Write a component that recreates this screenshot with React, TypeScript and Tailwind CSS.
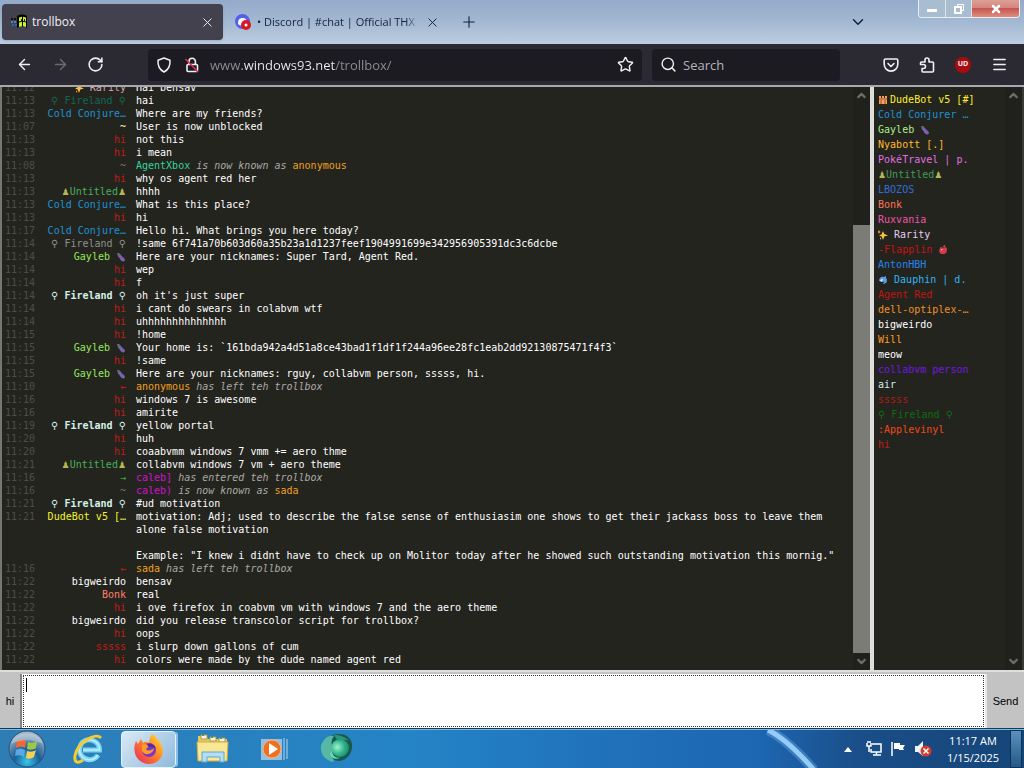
import React from "react";
import { ArrowLeft, ArrowRight, ChevronDown, ChevronUp, Menu, Plus, RotateCw, Search, Star, X } from "lucide-react";

const RED = "text-[#c01c14]";
const FIRE = "text-[#d4f0e8]";
const CYAN = "text-[#1b93d6]";

type Row = {
  time: string;
  name: string;
  color: string;
  text?: string;
  parts?: { value: string; style: string }[];
};

const note = "italic text-[#a9a9a4]";

const rows: Row[] = [
  { time: "11:12", name: "✨ Rarity", color: "text-[#d9a5b5]", text: "Hai bensav" },
  { time: "11:13", name: "⚲ Fireland ⚲", color: "text-[#0f6654]", text: "hai" },
  { time: "11:13", name: "Cold Conjure…", color: CYAN, text: "Where are my friends?" },
  { time: "11:07", name: "~", color: "text-[#fff7c0]", text: "User is now unblocked" },
  { time: "11:13", name: "hi", color: RED, text: "not this" },
  { time: "11:13", name: "hi", color: RED, text: "i mean" },
  { time: "11:08", name: "~", color: "text-[#73736e]", parts: [{ value: "AgentXbox", style: "text-[#35d49a]" }, { value: " is now known as ", style: note }, { value: "anonymous", style: "text-[#f0a020]" }] },
  { time: "11:13", name: "hi", color: RED, text: "why os agent red her" },
  { time: "11:13", name: "♟Untitled♟", color: "text-[#45b05a]", text: "hhhh" },
  { time: "11:13", name: "Cold Conjure…", color: CYAN, text: "What is this place?" },
  { time: "11:13", name: "hi", color: RED, text: "hi" },
  { time: "11:17", name: "Cold Conjure…", color: CYAN, text: "Hello hi. What brings you here today?" },
  { time: "11:14", name: "⚲ Fireland ⚲", color: "text-[#8f8f8b]", text: "!same 6f741a70b603d60a35b23a1d1237feef1904991699e342956905391dc3c6dcbe" },
  { time: "11:14", name: "Gayleb 🍆", color: "text-[#95e85a]", text: "Here are your nicknames: Super Tard, Agent Red." },
  { time: "11:14", name: "hi", color: RED, text: "wep" },
  { time: "11:14", name: "hi", color: RED, text: "f" },
  { time: "11:14", name: "⚲ Fireland ⚲", color: FIRE, text: "oh it's just super" },
  { time: "11:14", name: "hi", color: RED, text: "i cant do swears in colabvm wtf" },
  { time: "11:14", name: "hi", color: RED, text: "uhhhhhhhhhhhhhh" },
  { time: "11:15", name: "hi", color: RED, text: "!home" },
  { time: "11:15", name: "Gayleb 🍆", color: "text-[#95e85a]", text: "Your home is: `161bda942a4d51a8ce43bad1f1df1f244a96ee28fc1eab2dd92130875471f4f3`" },
  { time: "11:15", name: "hi", color: RED, text: "!same" },
  { time: "11:15", name: "Gayleb 🍆", color: "text-[#95e85a]", text: "Here are your nicknames: rguy, collabvm person, sssss, hi." },
  { time: "11:10", name: "←", color: "text-[#d81414]", parts: [{ value: "anonymous", style: "text-[#f0a020]" }, { value: " has left teh trollbox", style: note }] },
  { time: "11:16", name: "hi", color: RED, text: "windows 7 is awesome" },
  { time: "11:16", name: "hi", color: RED, text: "amirite" },
  { time: "11:19", name: "⚲ Fireland ⚲", color: FIRE, text: "yellow portal" },
  { time: "11:20", name: "hi", color: RED, text: "huh" },
  { time: "11:20", name: "hi", color: RED, text: "coaabvmm windows 7 vmm += aero thme" },
  { time: "11:21", name: "♟Untitled♟", color: "text-[#45b05a]", text: "collabvm windows 7 vm + aero theme" },
  { time: "11:16", name: "→", color: "text-[#30b53a]", parts: [{ value: "caleb]", style: "text-[#d010d0]" }, { value: " has entered teh trollbox", style: note }] },
  { time: "11:16", name: "~", color: "text-[#73736e]", parts: [{ value: "caleb)", style: "text-[#d010d0]" }, { value: " is now known as ", style: note }, { value: "sada", style: "text-[#f0a020]" }] },
  { time: "11:21", name: "⚲ Fireland ⚲", color: FIRE, text: "#ud motivation" },
  { time: "11:21", name: "DudeBot v5 […", color: "text-[#f2f230]", text: "motivation: Adj; used to describe the false sense of enthusiasim one shows to get their jackass boss to leave them alone false motivation\n\nExample: \"I knew i didnt have to check up on Molitor today after he showed such outstanding motivation this mornig.\"" },
  { time: "11:16", name: "←", color: "text-[#d81414]", parts: [{ value: "sada", style: "text-[#f0a020]" }, { value: " has left teh trollbox", style: note }] },
  { time: "11:22", name: "bigweirdo", color: "text-white", text: "bensav" },
  { time: "11:22", name: "Bonk", color: "text-[#ff7f66]", text: "real" },
  { time: "11:22", name: "hi", color: RED, text: "i ove firefox in coabvm vm with windows 7 and the aero theme" },
  { time: "11:22", name: "bigweirdo", color: "text-white", text: "did you release transcolor script for trollbox?" },
  { time: "11:22", name: "hi", color: RED, text: "oops" },
  { time: "11:22", name: "sssss", color: RED, text: "i slurp down gallons of cum" },
  { time: "11:22", name: "hi", color: RED, text: "colors were made by the dude named agent red" },
];

const users: { name: string; color: string }[] = [
  { name: "🏰DudeBot v5 [#]", color: "text-[#ffee30]" },
  { name: "Cold Conjurer …", color: CYAN },
  { name: "Gayleb 🍆", color: "text-[#a8ee88]" },
  { name: "Nyabott [.]", color: "text-[#ffb92a]" },
  { name: "PokéTravel | p.", color: "text-[#e070e0]" },
  { name: "♟Untitled♟", color: "text-[#3f9c55]" },
  { name: "LBOZOS", color: "text-[#2f6fd8]" },
  { name: "Bonk", color: "text-[#ff7355]" },
  { name: "Ruxvania", color: "text-[#f055a8]" },
  { name: "✨ Rarity", color: "text-[#e6cdf0]" },
  { name: "-Flapplin 🍎", color: "text-[#cc1010]" },
  { name: "AntonHBH", color: "text-[#2484ee]" },
  { name: "🐬 Dauphin | d.", color: "text-[#30b5f5]" },
  { name: "Agent Red", color: "text-[#c01410]" },
  { name: "dell-optiplex-…", color: "text-[#f09028]" },
  { name: "bigweirdo", color: "text-white" },
  { name: "Will", color: "text-[#ff9a20]" },
  { name: "meow", color: "text-white" },
  { name: "collabvm person", color: "text-[#7414e4]" },
  { name: "air", color: "text-[#cdeee8]" },
  { name: "sssss", color: "text-[#b01c14]" },
  { name: "⚲ Fireland ⚲", color: "text-[#0d6b12]" },
  { name: ":Applevinyl", color: "text-[#f04818]" },
  { name: "hi", color: "text-[#c01c14]" },
];

const emojiArt: Record<string, React.ReactNode> = {
  "🏰": (
    <svg viewBox="0 0 10 10" className="mr-0.5 inline-block size-2.5 align-[-2px]" aria-label="castle">
      <path d="M1 1h2v2h1V1h2v2h1V1h2v8H1z" fill="#f2a35c" />
      <path d="M1 4h8M3 5v4M7 5v4" stroke="#a34f27" />
    </svg>
  ),
  "🍆": (
    <svg viewBox="0 0 10 10" className="inline-block size-2.5 align-[-2px]" aria-label="eggplant">
      <path d="M1 1l2 0 2 2c1 2 4 3 4 5 0 2-4 2-5-1C3 5 1 4 2 3z" fill="#7862ad" />
      <path d="M1 1l3 1-2 2z" fill="#58714f" />
    </svg>
  ),
  "✨": (
    <svg viewBox="0 0 10 10" className="inline-block size-2.5 align-[-2px]" aria-label="sparkles">
      <path d="M5 1l1.3 3L10 5.500 6.300 6.600 5 10 3.700 6.600 1 5.500l2.700-1.200zM1 0l.6 1.400L3 2l-1.400.6L1 4 .4 2.600 0 2zM2 7l.5 1 1 .5-1 .5L2 10z" fill="#ffc13d" />
    </svg>
  ),
  "🍎": (
    <svg viewBox="0 0 10 10" className="inline-block size-2.5 align-[-2px]" aria-label="apple">
      <path d="M2 3c1-2 3 0 3 0s3-2 4 1c0 3-1 5-4 5S0 7 2 3z" fill="#d43b4d" />
      <path d="M6 0c1 0 2 1 1 2H5z" fill="#a35b52" />
      <path d="M3 4l2 0-2 2z" fill="#f29aa2" />
    </svg>
  ),
  "🐬": (
    <svg viewBox="0 0 10 10" className="inline-block size-2.5 align-[-2px]" aria-label="dolphin">
      <path d="M1 6c0-4 3-5 5-4l2-1v2c2 2 1 6-3 6l1-2z" fill="#5c9ae2" />
      <path d="M2 6c1-2 2-2 3-2L4 7z" fill="#d6e7f7" />
    </svg>
  ),
};

function Nick({ name }: { name: string }) {
  return (
    <>
      {Array.from(name).map((ch, i) => {
        if (emojiArt[ch]) return <React.Fragment key={i}>{emojiArt[ch]}</React.Fragment>;
        if (ch === "♟") return <span key={i} className="font-['DejaVu_Sans'] text-[9px] leading-none text-[#b5b850]">{ch}</span>;
        if (ch === "⚲") return <span key={i} className="font-['DejaVu_Sans'] text-[10px] leading-none">{ch}</span>;
        return ch;
      })}
    </>
  );
}

function ScrollBar({ thumb }: { thumb: boolean }) {
  return (
    <div className="flex w-[17px] shrink-0 flex-col bg-[#20201d] text-[#6b6b67]">
      <button aria-label="Scroll up" className="flex h-[17px] items-center justify-center">
        <ChevronUp size={13} strokeWidth={4} />
      </button>
      <div className="flex grow flex-col justify-end">{thumb && <div className="h-[78%] bg-[#7c7c77]" />}</div>
      <button aria-label="Scroll down" className="flex h-[17px] items-center justify-center">
        <ChevronDown size={13} strokeWidth={4} />
      </button>
    </div>
  );
}

function TabBar() {
  return (
    <header className="flex h-11 shrink-0 items-center bg-[linear-gradient(to_bottom,#94aaca_0%,#a3b8d2_50%,#bccde0_100%)] pl-0.5 font-['Open_Sans',sans-serif] text-xs">
      <div className="flex h-9 w-[221px] items-center rounded-[4px] bg-[#42414d] pr-2 pl-2 text-[#f0f0f4] shadow">
        <svg viewBox="0 0 18 16" className="h-4 w-[18px]" aria-hidden="true">
          <path d="M7 2c3-2 7-2 10 0v12c-3-2-7-2-10 0z" fill="#050505" />
          <path d="M9 3.500l3-.7v4L9 7.500zM13 2.800l3 .7v4l-3-.7zM9 8.500l3-.7v4.500l-3 .7zM13 7.800l3 .7V13l-3-.7z" fill="#c8f22c" />
          <path d="M1 4h2v2H1zM4 4h2v2H4z" fill="#111" />
          <path d="M1 7h2v2H1zM4 7h2v2H4z" fill="#4a87c2" />
          <path d="M2 10h2v2H2zM5 10h2v2H5z" fill="#2f64a8" />
          <path d="M11 5h1v2h-1zM14 5h1v2h-1z" fill="#1b2c0a" />
        </svg>
        <span className="ml-1 grow">trollbox</span>
        <button aria-label="Close tab"><X size={15} strokeWidth={1.5} /></button>
      </div>
      <div className="flex h-9 w-[229px] items-center pl-3 text-[#15203a]">
        <svg viewBox="0 0 16 16" className="size-4" aria-hidden="true">
          <circle cx="7.500" cy="7.500" r="7.500" fill="#5360e8" />
          <path d="M3 10c0-4 1-6 4.500-6S12 6 12 10c-2 2-7 2-9 0z" fill="#f4f5ff" />
          <circle cx="11" cy="11" r="5" fill="#dc1523" />
          <circle cx="11" cy="11" r="1.500" fill="#fff" />
        </svg>
        <span className="ml-1.5 w-[162px] overflow-hidden text-[11px] leading-4 whitespace-nowrap [mask-image:linear-gradient(to_right,#000_92%,transparent)]">• Discord | #chat | Official THX</span>
        <button aria-label="Close tab" className="ml-1.5"><X size={15} strokeWidth={1.5} /></button>
      </div>
      <button aria-label="New tab" className="ml-2 text-[#15203a]"><Plus size={18} strokeWidth={1.5} /></button>
      <div className="grow" />
      <button aria-label="List all tabs" className="mr-[51px] text-[#15203a]"><ChevronDown size={18} strokeWidth={2} /></button>
      <div className="mr-1 flex h-[18px] self-start overflow-hidden rounded-b border border-t-0 border-[#e8eef6] text-white">
        <button aria-label="Minimize" className="flex w-[27px] items-center justify-center border-r border-[#dbe4ee] bg-[#a9bdd0]"><span className="mt-1 h-[3px] w-2.5 bg-white" /></button>
        <button aria-label="Restore" className="flex w-[26px] items-center justify-center border-r border-[#dbe4ee] bg-[#a9bdd0]">
          <svg viewBox="0 0 12 12" className="size-3" fill="none" stroke="white"><path d="M4.500 3V1.500h6v6H9" /><path d="M2 4h6v6H2z" strokeWidth="2" /></svg>
        </button>
        <button aria-label="Close" className="flex w-[47px] items-center justify-center bg-[linear-gradient(to_bottom,#dda096_0%,#d2847c_50%,#c6564e_50%,#df8d80_100%)]"><X size={12} strokeWidth={5} /></button>
      </div>
    </header>
  );
}

function NavBar() {
  return (
    <nav className="flex h-[41px] shrink-0 items-center bg-[#2b2a33] pr-4 pl-4 font-['Open_Sans',sans-serif] text-[#f0f0f4]">
      <button aria-label="Back"><ArrowLeft size={17} strokeWidth={2} /></button>
      <button aria-label="Forward" className="ml-[19px] text-[#6b6a72]"><ArrowRight size={17} strokeWidth={2} /></button>
      <button aria-label="Reload" className="ml-[18px]"><RotateCw size={17} strokeWidth={2.2} /></button>
      <div className="ml-[44px] flex h-8 grow items-center rounded bg-[#1c1b22] px-2">
        <svg viewBox="0 0 16 16" className="size-4" fill="none" stroke="currentColor" strokeWidth="1.500" strokeLinejoin="round"><path d="M8 1l6 2.200c.4 5.300-1.400 9.300-6 11.800C3.400 12.500 1.600 8.500 2 3.200z" /></svg>
        <svg viewBox="0 0 16 16" className="ml-3 size-4" fill="none" stroke="currentColor" strokeWidth="1.600"><rect x="3" y="7.500" width="10.500" height="7" rx="1" /><path d="M5 7V4.500a3.200 3.200 0 0 1 6.400 0V7" /><path d="M1.500 2l12.500 13" stroke="#e22850" /></svg>
        <input
          aria-label="Address"
          defaultValue="www.windows93.net/trollbox/"
          className="ml-2.5 h-6 min-w-0 grow bg-[linear-gradient(to_right,#8f8f96_32px,#f0f0f4_32px,#f0f0f4_125px,#8f8f96_125px)] bg-clip-text text-[13px] text-transparent outline-none"
        />
        <button aria-label="Bookmark"><Star size={17} strokeWidth={2} /></button>
      </div>
      <div className="ml-2.5 flex h-8 w-[188px] items-center rounded bg-[#1c1b22] pl-2">
        <Search size={17} strokeWidth={2} />
        <input aria-label="Search" placeholder="Search" className="ml-1.5 h-6 w-32 bg-transparent text-[13px] outline-none placeholder:text-[#b5b4bb]" />
      </div>
      <div className="ml-[43px] flex items-center gap-5">
        <button aria-label="Save to Pocket"><svg viewBox="0 0 16 16" className="size-4" fill="none" stroke="currentColor" strokeWidth="1.600" strokeLinecap="round" strokeLinejoin="round"><path d="M2.500 2h11c.8 0 1.300.5 1.300 1.300v4a6.800 6.800 0 0 1-13.600 0v-4C1.200 2.500 1.700 2 2.500 2z" /><path d="M5 6.500l3 3 3-3" /></svg></button>
        <button aria-label="Extensions"><svg viewBox="0 0 16 16" className="size-4" fill="none" stroke="currentColor" strokeWidth="1.600" strokeLinejoin="round"><path d="M6 5V3a2 2 0 0 1 4 0v2h3.500q1 0 1 1v8q0 1-1 1H4q-1 0-1-1v-2.500h1.500a2 2 0 0 0 0-4H1.500V6q0-1 1-1z" /></svg></button>
        <button aria-label="uBlock" className="flex size-4 items-center justify-center rounded-full bg-[#a80a10] text-[7px] font-bold">UD</button>
        <button aria-label="Menu"><Menu size={17} strokeWidth={2} /></button>
      </div>
    </nav>
  );
}

function TaskBar() {
  return (
    <footer className="flex h-[39px] shrink-0 items-center border-t border-[#83b8df] bg-[linear-gradient(to_right,#2e7db5_0%,#2484c6_40%,#1f6cb7_65%,#1d66b2_74%,#1a4e88_84%,#154578_100%)]">
      <button aria-label="Start" className="ml-2">
        <svg viewBox="0 0 38 38" className="size-[38px]">
          <defs><radialGradient id="orb" cx="50%" cy="85%" r="80%"><stop offset="0" stopColor="#38c8e8" /><stop offset=".45" stopColor="#1d5d96" /><stop offset="1" stopColor="#a3b9c8" /></radialGradient></defs>
          <circle cx="19" cy="19" r="18" fill="url(#orb)" stroke="#275079" />
          <path d="M9 11c3-2 6-2 9 0l-1 7c-3-2-6-2-9 0z" fill="#ee6b35" />
          <path d="M20 12c3 1 6 1 9-1l-1 7c-3 2-6 2-9 1z" fill="#9bc847" />
          <path d="M8 20c3-2 6-2 9 0l-1 7c-3-2-6-2-9-1z" fill="#58a9e8" />
          <path d="M19 21c3 1 6 1 9-1l-2 7c-3 2-6 2-8 1z" fill="#f8d04e" />
          <path d="M3 14C6 0 32 0 35 14 25 9 13 9 3 14z" fill="#fff" opacity=".3" />
        </svg>
      </button>
      <button aria-label="Internet Explorer" className="ml-[27px]">
        <svg viewBox="0 0 32 32" className="size-8" fill="none">
          <path d="M25 22a10 10 0 1 1 1.500-5H10" stroke="#78d4f8" strokeWidth="5" />
          <path d="M25 22a10 10 0 1 1 1.500-5H10" stroke="#bdeefc" strokeWidth="1.500" />
          <path d="M28 5C22-1 4 10 2 23c-1 8 4 7 8 4" stroke="#f6cb30" strokeWidth="3" />
        </svg>
      </button>
      <button aria-label="Firefox" className="ml-4 flex h-[37px] w-[55px] items-center justify-center rounded-sm border border-[#e4f2fc] bg-[linear-gradient(135deg,#dbe9f4,#8db9dc)] shadow-[3px_0_0_-1px_#8dbde0]">
        <svg viewBox="0 0 32 32" className="size-8">
          <defs><linearGradient id="fox" x1="1" y1="0" x2="0" y2="1"><stop offset="0" stopColor="#ffe63e" /><stop offset=".45" stopColor="#ff8620" /><stop offset="1" stopColor="#e92268" /></linearGradient></defs>
          <path d="M19 1c4 2 5 5 8 8 7 11 0 22-11 22S-2 20 3 8l2 3 3-5 2 4c2-2 4-1 6 0 0-3 1-6 3-9z" fill="url(#fox)" />
          <circle cx="16" cy="17" r="7" fill="#7838c9" />
          <path d="M9 12c2-2 5-1 7 1l-3 3c2 3 6 1 8-1-1 7-10 8-12 3z" fill="#ff9b25" />
          <path d="M14 12c4-3 8 0 9 4-2-2-5-2-7-2z" fill="#5929a4" />
        </svg>
      </button>
      <button aria-label="Windows Explorer" className="ml-5">
        <svg viewBox="0 0 34 32" className="h-8 w-[34px]">
          <path d="M2 3h8l2 3h19v21H2z" fill="#e5c85f" />
          <path d="M5 2h6v4H5zM14 4h6v4h-6zM23 5h6v4h-6z" fill="#faf5dc" stroke="#a89a60" />
          <path d="M6 2h2M15 4h2M24 5h2" stroke="#419c52" strokeWidth="2" />
          <path d="M1 9h31l-1 19H2z" fill="#f8e793" stroke="#d2ad4a" />
          <path d="M6 19h22v10h-4v-5H11v5H6z" fill="#b5dcf3" stroke="#5ba8d6" />
        </svg>
      </button>
      <button aria-label="Media Player" className="ml-[30px]">
        <svg viewBox="0 0 28 26" className="h-[26px] w-7">
          <path d="M1 3h21v21H1z" fill="#9fc6e2" opacity=".9" /><path d="M24 2v22M27 3v20" stroke="#b8d8ee" />
          <circle cx="12" cy="13" r="9" fill="#f07022" stroke="#f9b282" /><path d="M9 7l9 6-9 6z" fill="#fff" />
        </svg>
      </button>
      <button aria-label="Green application" className="ml-8">
        <svg viewBox="0 0 34 32" className="h-8 w-[34px]">
          <defs><radialGradient id="green" cx="35%" cy="45%" r="65%"><stop offset="0" stopColor="#9cf5cf" /><stop offset=".6" stopColor="#31b48a" /><stop offset="1" stopColor="#1f8a6c" /></radialGradient></defs>
          <path d="M11 3C19-1 30 1 32 11c1 9-5 16-13 17-5 0-8-4-9-9z" fill="#155a4c" />
          <path d="M1 13C3 6 8 2 14 3c-3 4-3 8-1 12-2 5-1 10 1 14C6 28 0 22 1 13z" fill="#56b8a4" />
          <circle cx="20" cy="15" r="9" fill="url(#green)" />
          <path d="M12 17c0 5 3 8 8 8-5 2-9 0-10-4z" fill="#6fd6b4" />
          <path d="M14 2c5 0 11 1 15 6-5-2-8-1-11 0z" fill="#2b967b" />
        </svg>
      </button>
      <div className="flex h-full grow justify-end pr-[22px]">
        <svg viewBox="0 0 60 38" className="h-full w-[60px]" preserveAspectRatio="none" fill="none" aria-hidden="true"><path d="M6 0Q26 10 52 40" stroke="#69aee8" strokeWidth="10" opacity=".4" /><path d="M6 0Q26 10 52 40" stroke="#96cbf5" strokeWidth="5" /></svg>
      </div>
      <div className="flex items-center text-white">
        <button aria-label="Show hidden icons"><svg viewBox="0 0 8 5" className="h-[5px] w-2"><path d="M0 5l4-5 4 5z" fill="white" /></svg></button>
        <svg viewBox="0 0 16 16" className="ml-3.5 size-4" fill="none" stroke="white" strokeWidth="1.500" aria-label="Network"><path d="M6 3h9v8H5V8M7 14h8M10.500 11v3M1 2v3h4V2M3 5v6M2 0v2M4 0v2" /></svg>
        <svg viewBox="0 0 16 16" className="ml-2 size-4" aria-label="Action Center"><path d="M2 1v14" stroke="white" strokeWidth="1.500" /><path d="M4 2h6v2h5l-2 3 1 2H9V8H4z" fill="white" /></svg>
        <svg viewBox="0 0 18 16" className="ml-2 h-4 w-[18px]" aria-label="Volume muted"><path d="M1 5h3l5-5v15l-5-4H1z" fill="#edf3f7" /><circle cx="12" cy="10" r="5.500" fill="#d33b2c" /><path d="M9.500 7.500l5 5M14.500 7.500l-5 5" stroke="white" strokeWidth="1.500" /></svg>
      </div>
      <time className="ml-2.5 w-[62px] text-center font-['Open_Sans',sans-serif] text-[11px] leading-[17px] whitespace-nowrap text-white">11:17 AM<br />1/15/2025</time>
      <button aria-label="Show desktop" className="mr-0.5 ml-1.5 h-full w-3 shrink-0 border border-[#0e3156] bg-[linear-gradient(to_bottom,#5c91bd,#245785)]" />
    </footer>
  );
}

export default function App() {
  return (
    <div className="flex h-screen flex-col overflow-hidden bg-[#c3c3c3]">
      <TabBar />
      <NavBar />
      <main className="flex min-h-0 grow flex-col border-t-2 border-[#a9a8ae] font-['DejaVu_Sans_Mono',monospace] text-[10px]">
        <div className="flex min-h-0 grow">
          <section aria-label="Messages" className="flex min-w-0 grow border-l-2 border-[#77776f] bg-[#24241f]">
            <ul className="flex min-w-0 grow flex-col justify-end overflow-hidden pb-1">
              {rows.map((row, i) => (
                <li key={i} className="flex shrink-0 pl-[3px] leading-[13px]">
                  <span className="w-[37px] shrink-0 text-[#4d4d49]">{row.time}</span>
                  <span className={`h-[13px] w-[84px] shrink-0 text-right whitespace-nowrap ${row.color} ${row.color === FIRE ? "font-bold" : ""}`}><Nick name={row.name} /></span>
                  <span className="ml-2.5 min-w-0 grow whitespace-pre-wrap text-white">
                    {row.text}
                    {row.parts?.map((part) => <span key={part.value} className={part.style}>{part.value}</span>)}
                  </span>
                </li>
              ))}
            </ul>
            <ScrollBar thumb />
          </section>
          <aside aria-label="Users" className="flex w-[154px] shrink-0 border-r-2 border-l-4 border-r-[#3a3a37] border-l-[#dededc] bg-[#24241f]">
            <ul className="grow overflow-hidden pt-[5px] pl-1 leading-[15px] whitespace-nowrap">
              {users.map((user) => <li key={user.name} className={`h-[15px] ${user.color}`}><Nick name={user.name} /></li>)}
            </ul>
            <ScrollBar thumb={false} />
          </aside>
        </div>
        <form className="flex h-[59px] shrink-0 border-t-2 border-b border-t-[#dedede] border-b-[#123a5e] pt-0.5 font-['Liberation_Sans',sans-serif] text-[11px] text-black" onSubmit={(e) => e.preventDefault()}>
          <button type="button" className="w-[22px] border-r-2 border-[#858585] bg-[#c3c3c3]">hi</button>
          <div className="relative flex grow bg-white p-px">
            <textarea aria-label="Message" className="grow resize-none border border-dotted border-[#333] bg-white p-1 outline-none" />
            <span className="absolute top-1 left-1 h-3.5 w-px bg-black" aria-hidden="true" />
          </div>
          <button type="submit" className="w-[39px] border-l-2 border-[#e8e8e8] bg-[#c3c3c3]">Send</button>
        </form>
      </main>
      <TaskBar />
    </div>
  );
}
